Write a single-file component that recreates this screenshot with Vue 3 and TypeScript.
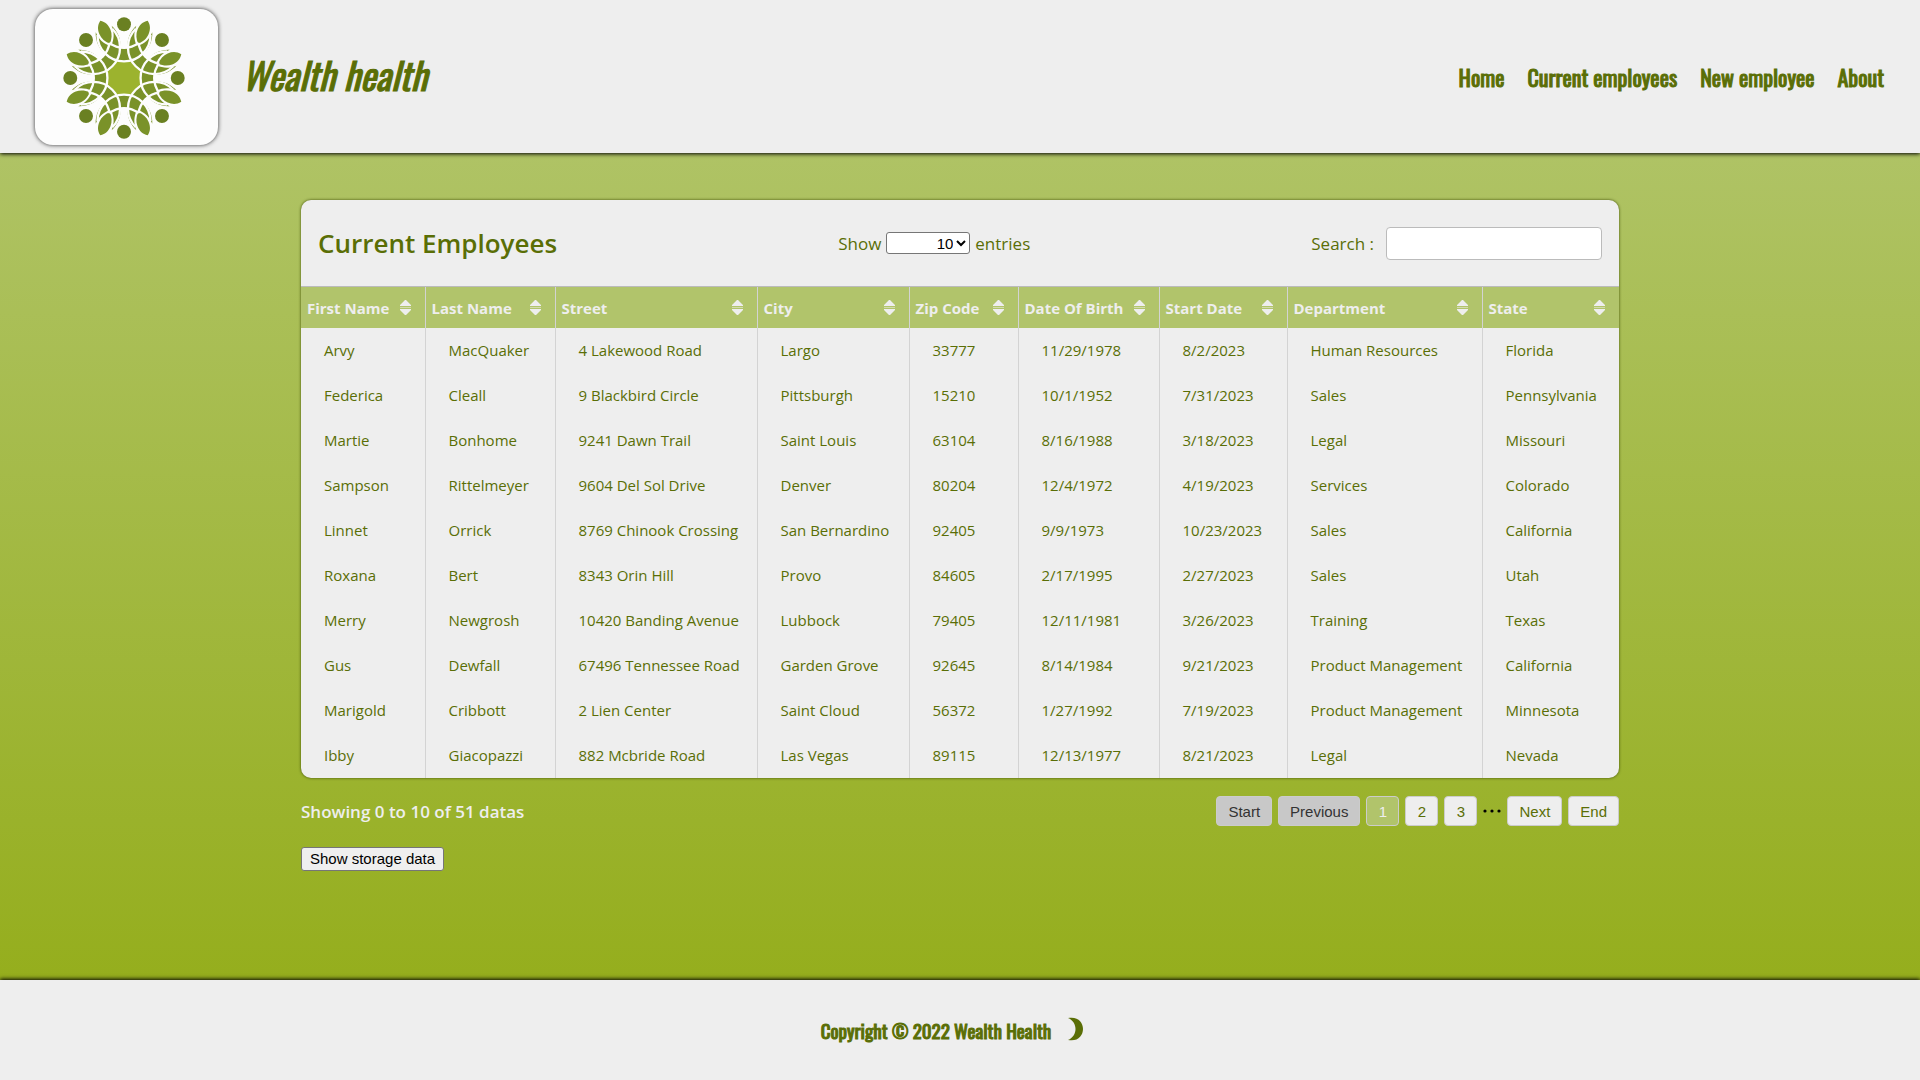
<script setup lang="ts">
import { ref } from 'vue'

interface Column {
  label: string
  width: number
}

const columns: Column[] = [
  { label: 'First Name', width: 124 },
  { label: 'Last Name', width: 130 },
  { label: 'Street', width: 202 },
  { label: 'City', width: 152 },
  { label: 'Zip Code', width: 109 },
  { label: 'Date Of Birth', width: 141 },
  { label: 'Start Date', width: 128 },
  { label: 'Department', width: 195 },
  { label: 'State', width: 137 },
]

const employees: string[][] = [
  ['Arvy', 'MacQuaker', '4 Lakewood Road', 'Largo', '33777', '11/29/1978', '8/2/2023', 'Human Resources', 'Florida'],
  ['Federica', 'Cleall', '9 Blackbird Circle', 'Pittsburgh', '15210', '10/1/1952', '7/31/2023', 'Sales', 'Pennsylvania'],
  ['Martie', 'Bonhome', '9241 Dawn Trail', 'Saint Louis', '63104', '8/16/1988', '3/18/2023', 'Legal', 'Missouri'],
  ['Sampson', 'Rittelmeyer', '9604 Del Sol Drive', 'Denver', '80204', '12/4/1972', '4/19/2023', 'Services', 'Colorado'],
  ['Linnet', 'Orrick', '8769 Chinook Crossing', 'San Bernardino', '92405', '9/9/1973', '10/23/2023', 'Sales', 'California'],
  ['Roxana', 'Bert', '8343 Orin Hill', 'Provo', '84605', '2/17/1995', '2/27/2023', 'Sales', 'Utah'],
  ['Merry', 'Newgrosh', '10420 Banding Avenue', 'Lubbock', '79405', '12/11/1981', '3/26/2023', 'Training', 'Texas'],
  ['Gus', 'Dewfall', '67496 Tennessee Road', 'Garden Grove', '92645', '8/14/1984', '9/21/2023', 'Product Management', 'California'],
  ['Marigold', 'Cribbott', '2 Lien Center', 'Saint Cloud', '56372', '1/27/1992', '7/19/2023', 'Product Management', 'Minnesota'],
  ['Ibby', 'Giacopazzi', '882 Mcbride Road', 'Las Vegas', '89115', '12/13/1977', '8/21/2023', 'Legal', 'Nevada'],
]

const links = ['Home', 'Current employees', 'New employee', 'About']
const turns = [0, 45, 90, 135, 180, 225, 270, 315]
const entries = ref('10')
const search = ref('')
</script>

<template>
  <div class="page">
    <header class="topbar">
      <a class="logo" href="#" aria-label="Wealth health">
        <svg viewBox="-190 -190 380 380" aria-hidden="true">
          <g fill="#7a9229">
            <polygon
              points="0,-91 41,-99 64,-64 99,-41 91,0 99,41 64,64 41,99 0,91 -41,99 -64,64 -99,41 -91,0 -99,-41 -64,-64 -41,-99"
            />
            <g v-for="t in turns" :key="t" :transform="`rotate(${t + 22.5})`">
              <path d="M0-187C13-178 18-166 18-150C18-136 11-122 0-112C-11-122-18-136-18-150C-18-166-13-178 0-187Z" />
              <path d="M26-160C36-140 38-108 23-87C15-89 7-97 3-106C17-120 26-136 26-160Z" />
              <path d="M-26-160C-36-140-38-108-23-87C-15-89-7-97-3-106C-17-120-26-136-26-160Z" />
            </g>
          </g>
          <polygon
            fill="#9cb32e"
            points="0,-50 22,-53 35,-35 53,-22 50,0 53,22 35,35 22,53 0,50 -22,53 -35,35 -53,22 -50,0 -53,-22 -35,-35 -22,-53"
          />
          <g v-for="t in turns" :key="t" :transform="`rotate(${t})`">
            <path d="M-80-130A80 80 0 0 0 80-130" fill="none" stroke="#fdfdfd" stroke-width="7" />
            <path d="M-44-106A72 72 0 0 0 44-106" fill="none" stroke="#fdfdfd" stroke-width="7" />
            <circle cy="-162" r="21" fill="#6a8022" />
          </g>
        </svg>
      </a>
      <p class="brand">Wealth health</p>
      <nav class="nav">
        <a v-for="link in links" :key="link" href="#">{{ link }}</a>
      </nav>
    </header>

    <main class="content">
      <section class="card">
        <div class="toolbar">
          <h1>Current Employees</h1>
          <label class="show">
            Show
            <select v-model="entries">
              <option>10</option>
              <option>25</option>
              <option>50</option>
              <option>100</option>
            </select>
            entries
          </label>
          <label class="search">
            Search :
            <input v-model="search" type="text" />
          </label>
        </div>
        <table>
          <colgroup>
            <col v-for="c in columns" :key="c.label" :style="{ width: c.width + 'px' }" />
          </colgroup>
          <thead>
            <tr>
              <th v-for="c in columns" :key="c.label" scope="col">
                <div class="head">
                  <span>{{ c.label }}</span>
                  <svg width="11" height="15" viewBox="0 0 11 15" aria-hidden="true">
                    <path d="M5 0H6L11 5V6H0V5ZM0 9H11V10L6 15H5L0 10Z" fill="#eee" />
                    <path d="M0 7H11V8H0Z" fill="#d3dcae" />
                  </svg>
                </div>
              </th>
            </tr>
          </thead>
          <tbody>
            <tr v-for="row in employees" :key="row[1]">
              <td v-for="(cell, i) in row" :key="i">{{ cell }}</td>
            </tr>
          </tbody>
        </table>
      </section>

      <div class="below">
        <p>Showing 0 to 10 of 51 datas</p>
        <div class="pager">
          <button type="button" disabled>Start</button>
          <button type="button" disabled>Previous</button>
          <button type="button" class="current">1</button>
          <button type="button">2</button>
          <button type="button">3</button>
          <svg width="18" height="4" viewBox="0 0 18 4" aria-hidden="true">
            <circle cx="2" cy="2" r="1.6" />
            <circle cx="9" cy="2" r="1.6" />
            <circle cx="16" cy="2" r="1.6" />
          </svg>
          <button type="button">Next</button>
          <button type="button">End</button>
        </div>
      </div>
      <button type="button" class="storage">Show storage data</button>
    </main>

    <footer class="footer">
      <p>Copyright © 2022 Wealth Health</p>
      <button type="button" class="theme" aria-label="Dark mode">
        <svg width="16" height="24" viewBox="0 0 16 24" aria-hidden="true">
          <path d="M0 1C20-3 20 27 0 23C10 19 10 5 0 1Z" fill="#5a6e06" />
        </svg>
      </button>
    </footer>
  </div>
</template>

<style>
body {
  margin: 0;
}
</style>

<style scoped>
* {
  box-sizing: border-box;
}

.page {
  display: flex;
  flex-direction: column;
  min-height: 100vh;
  color: #5a6e06;
  font-family: 'Trebuchet MS', 'Open Sans', sans-serif;
  font-size: 15px;
}

p,
h1 {
  margin: 0;
}

.topbar,
.footer {
  position: relative;
  display: flex;
  align-items: center;
  background: #eee;
  font-family: Oswald, 'Liberation Sans Narrow', 'Roboto Condensed', sans-serif;
  font-weight: 400;
  -webkit-text-stroke: 1px #5a6e06;
}

.topbar {
  height: 153px;
  padding: 0 36px 0 35px;
  box-shadow: 0 1px 4px #000;
}

.logo {
  display: flex;
  align-items: center;
  width: 183px;
  height: 136px;
  padding: 2px 0 0 26px;
  border-radius: 18px;
  background: #fdfdfd;
  box-shadow: 0 0 4px #333;
}

.logo svg {
  width: 126px;
  height: 126px;
}

.brand {
  margin-left: 24px;
  padding-bottom: 4px;
  font-size: 37px;
  font-style: italic;
}

.nav {
  display: flex;
  gap: 23px;
  margin-left: auto;
  font-size: 22px;
}

.nav a {
  color: inherit;
  text-decoration: none;
}

.content {
  flex: 1;
  padding: 47px max(16px, calc(50% - 659px)) 24px;
  background: linear-gradient(#afc365, #95ae1d);
}

.card {
  overflow: hidden;
  border-radius: 10px;
  background: #eee;
  box-shadow: 0 0 3px #3c4a05;
}

.toolbar {
  display: flex;
  align-items: center;
  justify-content: space-between;
  height: 87px;
  padding: 0 17px;
  border-bottom: 1px solid #bbb;
  font-size: 17px;
}

h1 {
  font-size: 26px;
  font-weight: 600;
}

.show,
.search {
  display: flex;
  align-items: center;
  gap: 5px;
}

.search {
  gap: 12px;
}

select {
  width: 84px;
  height: 22px;
  border: 1px solid #767676;
  border-radius: 3px;
  background: #fff;
  color: #000;
  font: 15px 'Liberation Sans', sans-serif;
  text-align: right;
}

input {
  width: 216px;
  height: 33px;
  border: 1px solid #bbb;
  border-radius: 4px;
  background: #fff;
  font: inherit;
}

table {
  width: 100%;
  border-collapse: collapse;
  table-layout: fixed;
}

th {
  height: 41px;
  padding: 0 14px 0 6px;
  background: #b1c46b;
  color: #eee;
  font-weight: 700;
  text-align: left;
}

.head {
  display: flex;
  align-items: center;
  justify-content: space-between;
}

th,
td {
  border-right: 1px solid #d3d3d3;
  white-space: nowrap;
}

td {
  height: 45px;
  padding: 0 0 2px 23px;
}

.below {
  display: flex;
  align-items: center;
  justify-content: space-between;
  margin-top: 18px;
}

.below p {
  color: #eee;
  font-size: 17px;
  font-weight: 600;
}

.pager {
  display: flex;
  align-items: center;
  gap: 6px;
}

.pager button {
  min-width: 33px;
  height: 30px;
  padding: 0 11px;
  border: 1px solid #ccc;
  border-radius: 4px;
  background: #eee;
  color: #5a6e06;
  font: 15px 'Liberation Sans', sans-serif;
}

.pager button:disabled {
  background: #c8c8c8;
  color: #333;
}

.pager .current {
  background: #b1c46b;
  color: #eee;
}

.storage {
  height: 24px;
  margin-top: 21px;
  padding: 0 8px 1px;
  border: 1px solid #767676;
  border-radius: 3px;
  background: #efefef;
  color: #000;
  font: 15px 'Liberation Sans', sans-serif;
}

.footer {
  justify-content: center;
  gap: 17px;
  height: 100px;
  box-shadow: 0 -1px 4px #000;
  font-size: 19px;
}

.theme {
  display: flex;
  padding: 0 15px 2px 0;
  border: 0;
  background: none;
}
</style>
